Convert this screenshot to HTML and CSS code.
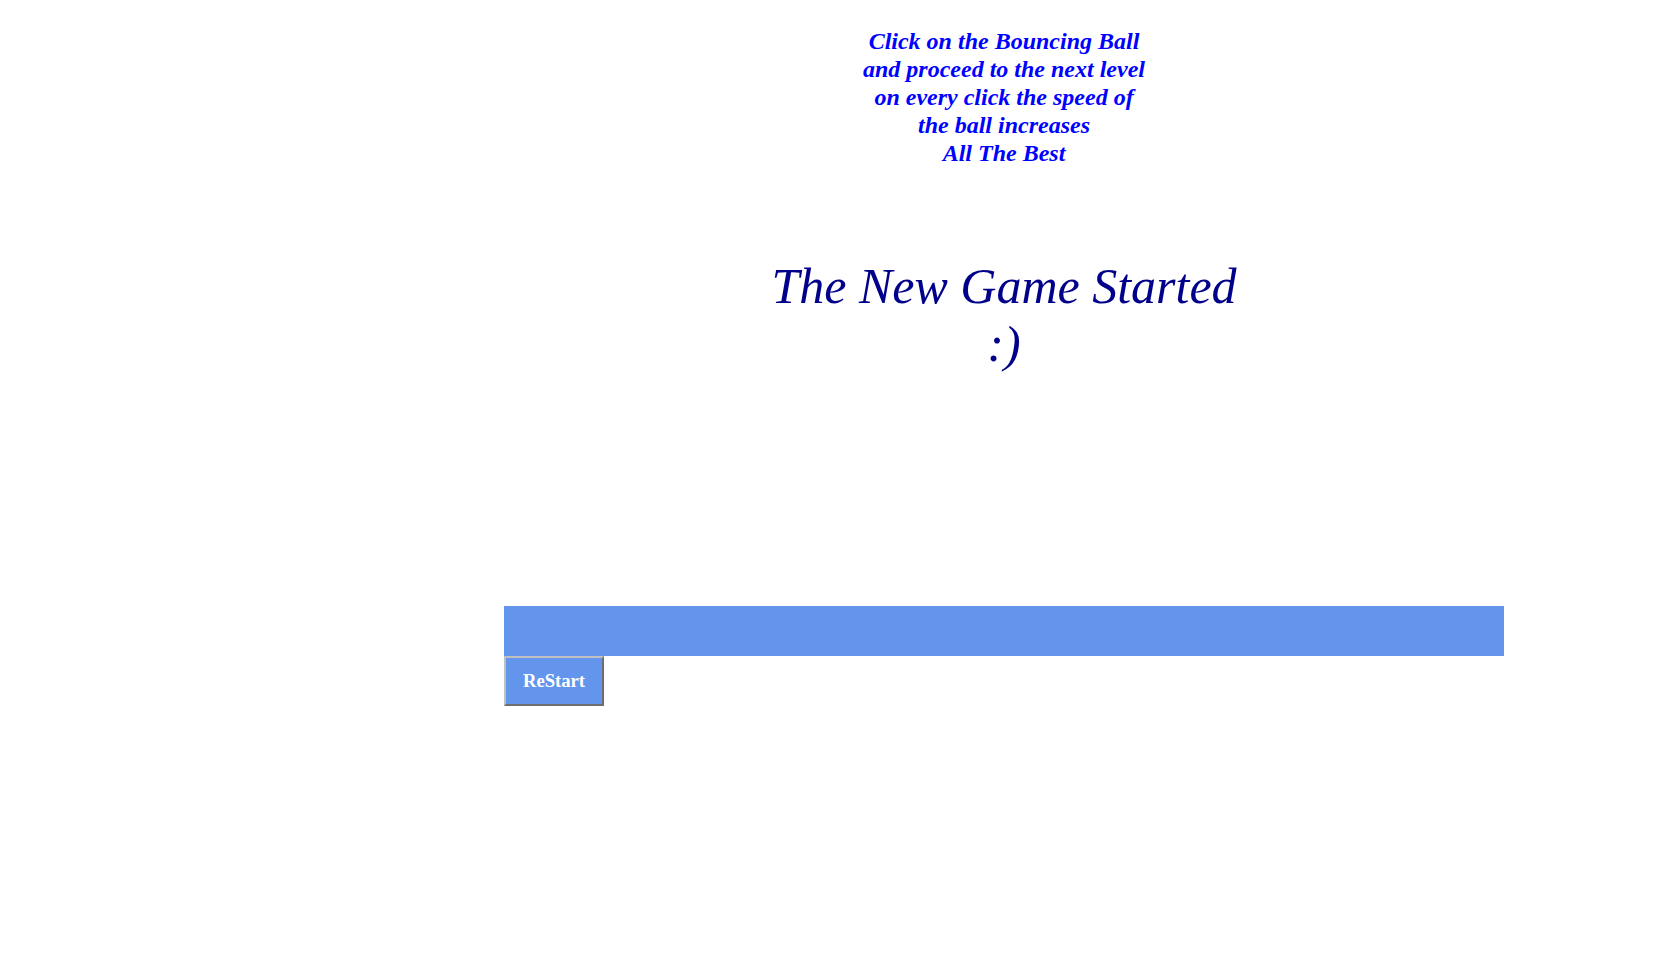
FILE: index.html
```html
<!DOCTYPE html>
<html>
<head>
<meta charset="utf-8">
<title>Bouncing Ball</title>
<link rel="stylesheet" href="styles.css">
</head>
<body>
<div class="wrap">
  <div class="intro">
    Click on the Bouncing Ball<br>
    and proceed to the next level<br>
    on every click the speed of<br>
    the ball increases<br>
    All The Best
  </div>
  <div class="title">The New Game Started<br>:)</div>
  <div class="bar"></div>
  <button class="restart">ReStart</button>
</div>
</body>
</html>
```

FILE: styles.css
```css
html, body {
  margin: 0;
  padding: 0;
  background: #ffffff;
}
.wrap {
  margin-left: 504px;
  width: 1000px;
  font-family: "Liberation Serif", "Times New Roman", serif;
}
.intro {
  padding-top: 27px;
  text-align: center;
  font-size: 24px;
  font-weight: bold;
  font-style: italic;
  color: #0000ff;
  line-height: 28px;
}
.title {
  margin-top: 91px;
  text-align: center;
  font-size: 50px;
  font-style: italic;
  color: #00008b;
  line-height: 57.5px;
}
.bar {
  margin-top: 233px;
  height: 50px;
  background: #6495ed;
}
.restart {
  display: block;
  width: 100px;
  height: 50px;
  margin: 0;
  padding: 0;
  background: #6495ed;
  color: #ffffff;
  font-family: "Liberation Serif", "Times New Roman", serif;
  font-weight: bold;
  font-size: 18.67px;
  border-width: 2px;
  border-style: solid;
  border-color: #c0c0c0 #6e6e6e #6e6e6e #c0c0c0;
}
```
